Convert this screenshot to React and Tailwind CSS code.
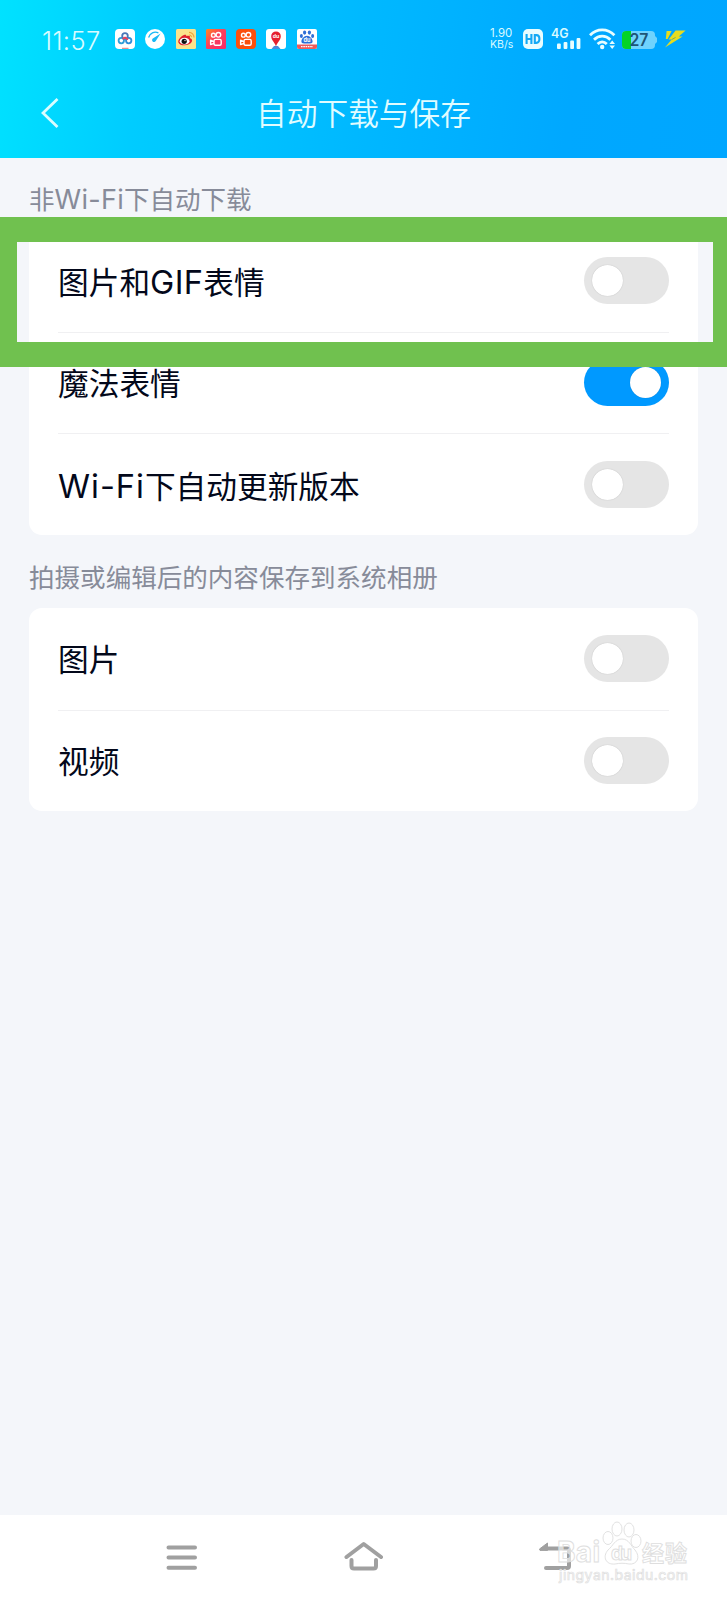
const FONT = "font-['Inter','Noto_Sans_CJK_SC',sans-serif]";

function Mixed({ text, small }) {
  return text.split(/([A-Za-z-]+)/).map((part, i) =>
    /[A-Za-z]/.test(part) ? (
      <span
        key={i}
        className={
          part === 'GIF' || small
            ? 'text-[1.06em] tracking-[0.01em] [font-weight:400]'
            : 'text-[1.06em] tracking-[0.03em] [font-weight:400]'
        }
      >
        {part}
      </span>
    ) : (
      part
    ),
  );
}

function Toggle({ on }) {
  return (
    <div
      className={
        on
          ? 'flex h-[47px] w-[85px] items-center justify-end rounded-full bg-[#0099ff] px-[8px]'
          : 'flex h-[47px] w-[85px] items-center rounded-full bg-[#e5e5e5] px-[8px]'
      }
    >
      <div className="size-[31px] rounded-full bg-white shadow-[0_0_1px_rgba(0,0,0,0.25)]" />
    </div>
  );
}

function Row({ label, on, last }) {
  return (
    <div
      className={
        last
          ? 'flex flex-1 items-center justify-between'
          : 'flex flex-1 items-center justify-between shadow-[0_1px_0_#f0f0f2]'
      }
    >
      <span className="pt-[4px] text-[30.7px] leading-none whitespace-nowrap text-[#03081a]">
        <Mixed text={label} />
      </span>
      <Toggle on={on} />
    </div>
  );
}

function CloudApp() {
  return (
    <svg viewBox="0 0 20 20" className="size-5">
      <rect width="20" height="20" rx="4" fill="#fff" />
      <g fill="none" strokeWidth="1.8">
        <circle cx="6.3" cy="11.6" r="2.7" stroke="#2f9fd8" />
        <circle cx="13.7" cy="11.6" r="2.7" stroke="#2f8fd8" />
        <circle cx="10" cy="7" r="2.8" stroke="#4a78b8" />
        <path d="M7.6 10 L10 8.6 L13 10.6" stroke="#ee3f5a" />
      </g>
      <rect x="7" y="18.8" width="6.5" height="1" fill="#d77" />
    </svg>
  );
}

function GaugeApp() {
  return (
    <svg viewBox="0 0 20 20" className="size-5">
      <circle cx="10" cy="10" r="10" fill="#fff" />
      <path d="M3.6 8.5 A7 7 0 0 1 13.4 3.9" fill="none" stroke="#18b8f5" strokeWidth="1.3" />
      <path d="M15.6 4.5 L10.9 11.8 A2 2 0 1 1 8.2 9.2 Z" fill="#18b8f5" />
    </svg>
  );
}

function WeiboApp() {
  return (
    <svg viewBox="0 0 20 20" className="size-5">
      <rect width="20" height="20" rx="1.5" fill="#fbe38c" />
      <path d="M8 6 C10 5.2 10.5 6 10.3 7.3 C13 6.2 14.6 7 13.8 9 C16 9.8 16.6 11 15.8 12.8 C14 17 4 17.6 2.4 13.4 C1.6 11 5 7 8 6 Z" fill="#e0202c" />
      <ellipse cx="8.6" cy="12.2" rx="4.9" ry="3.4" fill="#fff" />
      <circle cx="8.2" cy="12.3" r="2.6" fill="#111" />
      <circle cx="9" cy="11.6" r="0.7" fill="#fff" />
      <path d="M13 3.4 A5 5 0 0 1 18 8.6 M13.2 5.8 A2.8 2.8 0 0 1 15.6 8.2" fill="none" stroke="#f2a53a" strokeWidth="1.2" />
    </svg>
  );
}

function CameraApp({ pink }) {
  return (
    <svg viewBox="0 0 20 20" className="size-5">
      <defs>
        <linearGradient id="lite" x1="0" y1="0" x2="1" y2="1">
          <stop offset="0" stopColor="#ff8a1e" />
          <stop offset="0.45" stopColor="#fb3f5b" />
          <stop offset="1" stopColor="#f22a6c" />
        </linearGradient>
      </defs>
      <rect width="20" height="20" rx={pink ? 1.5 : 4} fill={pink ? 'url(#lite)' : '#fb4f0c'} />
      <g fill="none" stroke="#fff" strokeWidth="1.4">
        <circle cx="7.4" cy="6.2" r="1.9" />
        <circle cx="12.4" cy="5.8" r="2.3" />
        <rect x="8" y="10.4" width="7.2" height="5.8" rx="1.5" />
        <path d="M8 12.6 L4.6 11.2 V15.6 L8 14.4" strokeLinejoin="round" />
      </g>
    </svg>
  );
}

function PinApp() {
  return (
    <svg viewBox="0 0 20 20" className="size-5">
      <rect width="20" height="20" rx="3" fill="#fff" />
      <path d="M5.5 20 L8 17 H12 L14.5 20 Z" fill="#4a8bdc" />
      <path d="M10 18 C9.6 13.8 5.2 11.6 5.2 7.2 A4.8 4.8 0 0 1 14.8 7.2 C14.8 11.6 10.4 13.8 10 18 Z" fill="#e61f2e" />
      <text x="10" y="9.2" fontSize="5.2" fontWeight="700" fill="#fff" textAnchor="middle">du</text>
    </svg>
  );
}

function PawApp() {
  return (
    <svg viewBox="0 0 20 20" className="size-5">
      <rect width="20" height="20" rx="2" fill="#fff" />
      <g fill="#2f6fd6">
        <ellipse cx="7.6" cy="3.6" rx="1.6" ry="2.1" />
        <ellipse cx="12.4" cy="3.6" rx="1.6" ry="2.1" />
        <ellipse cx="4.4" cy="7" rx="1.5" ry="1.9" />
        <ellipse cx="15.6" cy="7" rx="1.5" ry="1.9" />
        <path d="M10 6.8 C13 6.8 15.6 10 15.6 12.4 C15.6 14.8 13 14.6 10 14.6 C7 14.6 4.4 14.8 4.4 12.4 C4.4 10 7 6.8 10 6.8 Z" />
      </g>
      <text x="10" y="13" fontSize="5.6" fontWeight="700" fill="#fff" textAnchor="middle">du</text>
      <path d="M0 15.4 H20 V18 A2 2 0 0 1 18 20 H2 A2 2 0 0 1 0 18 Z" fill="#ef5a5a" />
      <path d="M4 17.6 H16" stroke="#fff" strokeWidth="1.4" strokeDasharray="1.6 0.7" />
    </svg>
  );
}

function StatusBar() {
  return (
    <div className="flex h-[78px] items-center pl-[42px]">
      <span className="w-[73px] pt-[3px] text-[25.5px] leading-none tracking-[0.4px] whitespace-nowrap text-[#d9fbff] [font-weight:320]">11:57</span>
      <div className="flex gap-[10.3px]">
        <CloudApp />
        <GaugeApp />
        <WeiboApp />
        <CameraApp pink />
        <CameraApp />
        <PinApp />
        <PawApp />
      </div>
      <div className="ml-auto flex items-center pr-[41px] text-[#d9faff]">
        <div className="flex w-[33px] flex-col items-start text-[11.5px] leading-[11.5px] whitespace-nowrap">
          <span>1.90</span>
          <span className="text-[10.5px]">KB/s</span>
        </div>
        <svg viewBox="0 0 20 20" className="h-5 w-5">
          <rect width="20" height="20" rx="5" fill="#e8fdff" />
          <g fill="none" stroke="#12a9f5" strokeWidth="2.1">
            <path d="M3.6 5 V15 M8.4 5 V15 M3.6 10 H8.4" />
            <path d="M11.8 6.1 H13.4 C17.4 6.1 17.4 13.9 13.4 13.9 H11.8 Z" />
          </g>
        </svg>
        <svg viewBox="0 -4 30 26" className="mb-[4px] ml-[8px] h-[26px] w-[30px]">
          <text x="0" y="10.2" fontSize="12.5" fontWeight="600" fill="#d9faff">4G</text>
          <g fill="#e8fdff">
            <rect x="6" y="15.5" width="3.8" height="5.5" rx="1" />
            <rect x="12.6" y="14" width="3.8" height="7" rx="1" />
            <rect x="19.2" y="12.5" width="3.8" height="8.5" rx="1" />
            <rect x="25.6" y="10" width="3.8" height="11" rx="1" />
          </g>
        </svg>
        <svg viewBox="0 0 27 22" className="ml-[8px] h-[22px] w-[27px]">
          <g fill="none" stroke="#e8fdff" strokeWidth="2.8">
            <path d="M1 7.2 C8 0.2 18.4 0.2 25.4 7.2" />
            <path d="M5 11.8 C9.8 7 16.6 7 21.4 11.8" />
            <path d="M8.6 16 C11.4 13.2 15 13.2 17.8 16" />
          </g>
          <circle cx="13.2" cy="19" r="2.2" fill="#e8fdff" />
          <path d="M20.4 16 L23.2 12.6 L26 16 Z M20.4 17.6 L23.2 21 L26 17.6 Z" fill="#e8fdff" />
        </svg>
        <svg viewBox="0 0 36 18" className="mt-[1px] ml-[6px] h-[18px] w-[36px]">
          <rect width="33" height="18" rx="4" fill="#6fd3fd" />
          <path d="M4 0 H9 V18 H4 A4 4 0 0 1 0 14 V4 A4 4 0 0 1 4 0 Z" fill="#04d326" />
          <path d="M33 5 L35 7 V11 L33 13 Z" fill="#6fd3fd" />
          <text x="17" y="15" fontSize="17" fontWeight="600" fill="#1d5577" textAnchor="middle" textLength="19" lengthAdjust="spacingAndGlyphs">27</text>
        </svg>
        <svg viewBox="0 0 22 18" className="ml-[6px] h-[18px] w-[22px]">
          <path d="M2.6 1 H7.6 L3.6 9 H1.8 Z M11.6 0.6 L4.6 9.6 H7.6 L1 17.6 L18.6 6.6 H14.8 L21.6 0.6 Z" fill="#e6dc1e" />
          <path d="M7.6 9.6 L11.6 7.4" fill="none" stroke="#5aa070" strokeWidth="0.8" />
        </svg>
      </div>
    </div>
  );
}

function Watermark() {
  return (
    <svg viewBox="0 0 140 66" className="absolute top-[5px] right-[31px] h-[66px] w-[140px] overflow-visible">
      <g fill="#fff" fillOpacity="0.6" stroke="#dedede" strokeWidth="0.9">
        <text x="1" y="42" fontSize="28" fontWeight="700" textLength="43">Bai</text>
        <ellipse cx="52" cy="18" rx="5" ry="6.5" />
        <ellipse cx="61" cy="9" rx="5" ry="7" />
        <ellipse cx="73" cy="10" rx="5" ry="7" />
        <ellipse cx="80" cy="21" rx="5" ry="6.5" />
        <path d="M66 19 C73 19 75 26 79 30 C85 37 81 45 73 44 C68 43 64 43 59 44 C50 45 46 37 52 30 C57 26 59 19 66 19 Z" />
        <text x="55" y="40" fontSize="19" fontWeight="700" textLength="21">du</text>
        <text x="86" y="41" fontSize="22" fontWeight="700" textLength="45">经验</text>
        <text x="3" y="59.5" fontSize="14" fontWeight="400" strokeWidth="0.7" textLength="129">jingyan.baidu.com</text>
      </g>
    </svg>
  );
}

export default function App() {
  return (
    <div className={`relative flex h-[1600px] w-[727px] flex-col overflow-hidden bg-[#f4f6fa] ${FONT}`}>
      <header className="h-[158px] shrink-0 bg-[linear-gradient(98deg,#00e2ff_0%,#00ccff_20%,#00b8ff_50%,#00a8ff_78%,#00a6ff_100%)]">
        <StatusBar />
        <div className="grid h-[70px] grid-cols-[1fr_auto_1fr] items-center">
          <svg viewBox="0 0 18 30" className="ml-[41px] h-[30px] w-[18px]">
            <path d="M16.5 1 L2 15 L16.5 29" fill="none" stroke="#d9fdff" strokeWidth="2.8" />
          </svg>
          <h1 className="pt-[2px] text-[30.7px] leading-none text-[#e0fcff] [font-weight:350]">自动下载与保存</h1>
        </div>
      </header>

      <main className="flex flex-1 flex-col px-[29px]">
        <h2 className="flex h-[72px] items-center pt-[12px] text-[25.5px] leading-none text-[#878b99]">
          <span className="whitespace-nowrap">
            <Mixed text="非Wi-Fi下自动下载" small />
          </span>
        </h2>
        <section className="flex h-[305px] flex-col rounded-[13px] bg-white px-[29px]">
          <Row label="图片和GIF表情" />
          <Row label="魔法表情" on />
          <Row label="Wi-Fi下自动更新版本" last />
        </section>
        <h2 className="flex h-[73px] items-center pt-[12px] text-[25.55px] leading-none text-[#878b99]">拍摄或编辑后的内容保存到系统相册</h2>
        <section className="flex h-[203px] flex-col rounded-[13px] bg-white px-[29px]">
          <Row label="图片" />
          <Row label="视频" last />
        </section>
      </main>

      <nav className="relative flex h-[85px] shrink-0 items-center bg-white pl-[166px]">
        <svg viewBox="0 0 32 26" className="h-[26px] w-[32px]">
          <path d="M2.5 2.5 H29 M2.5 12.6 H29 M2.5 22.8 H29" stroke="#a0a0a0" strokeWidth="4" strokeLinecap="round" />
        </svg>
        <svg viewBox="0 0 40 30" className="mb-[4px] ml-[146px] h-[30px] w-[40px]">
          <path d="M2.5 16 L19.7 3 L37 16 M7.5 19 V25 Q7.5 27.5 10 27.5 H29.5 Q32 27.5 32 25 V19" fill="none" stroke="#a0a0a0" strokeWidth="4" strokeLinecap="round" strokeLinejoin="round" />
        </svg>
        <svg viewBox="0 0 34 28" className="mb-[4px] ml-[154px] h-[28px] w-[34px]">
          <path d="M8 6.5 H29 Q31 6.5 31 8.5 V24 Q31 26 29 26 H8" fill="none" stroke="#a0a0a0" strokeWidth="4" strokeLinecap="round" />
          <path d="M1.5 7 L9.5 1 V8.4 H2 Z" fill="#a0a0a0" stroke="#a0a0a0" strokeLinejoin="round" />
        </svg>
        <Watermark />
      </nav>

      <div className="pointer-events-none absolute top-[217px] left-0 h-[150px] w-[727px] border-y-[25px] border-r-[14px] border-l-[17px] border-[#70c14f]" />
    </div>
  );
}
